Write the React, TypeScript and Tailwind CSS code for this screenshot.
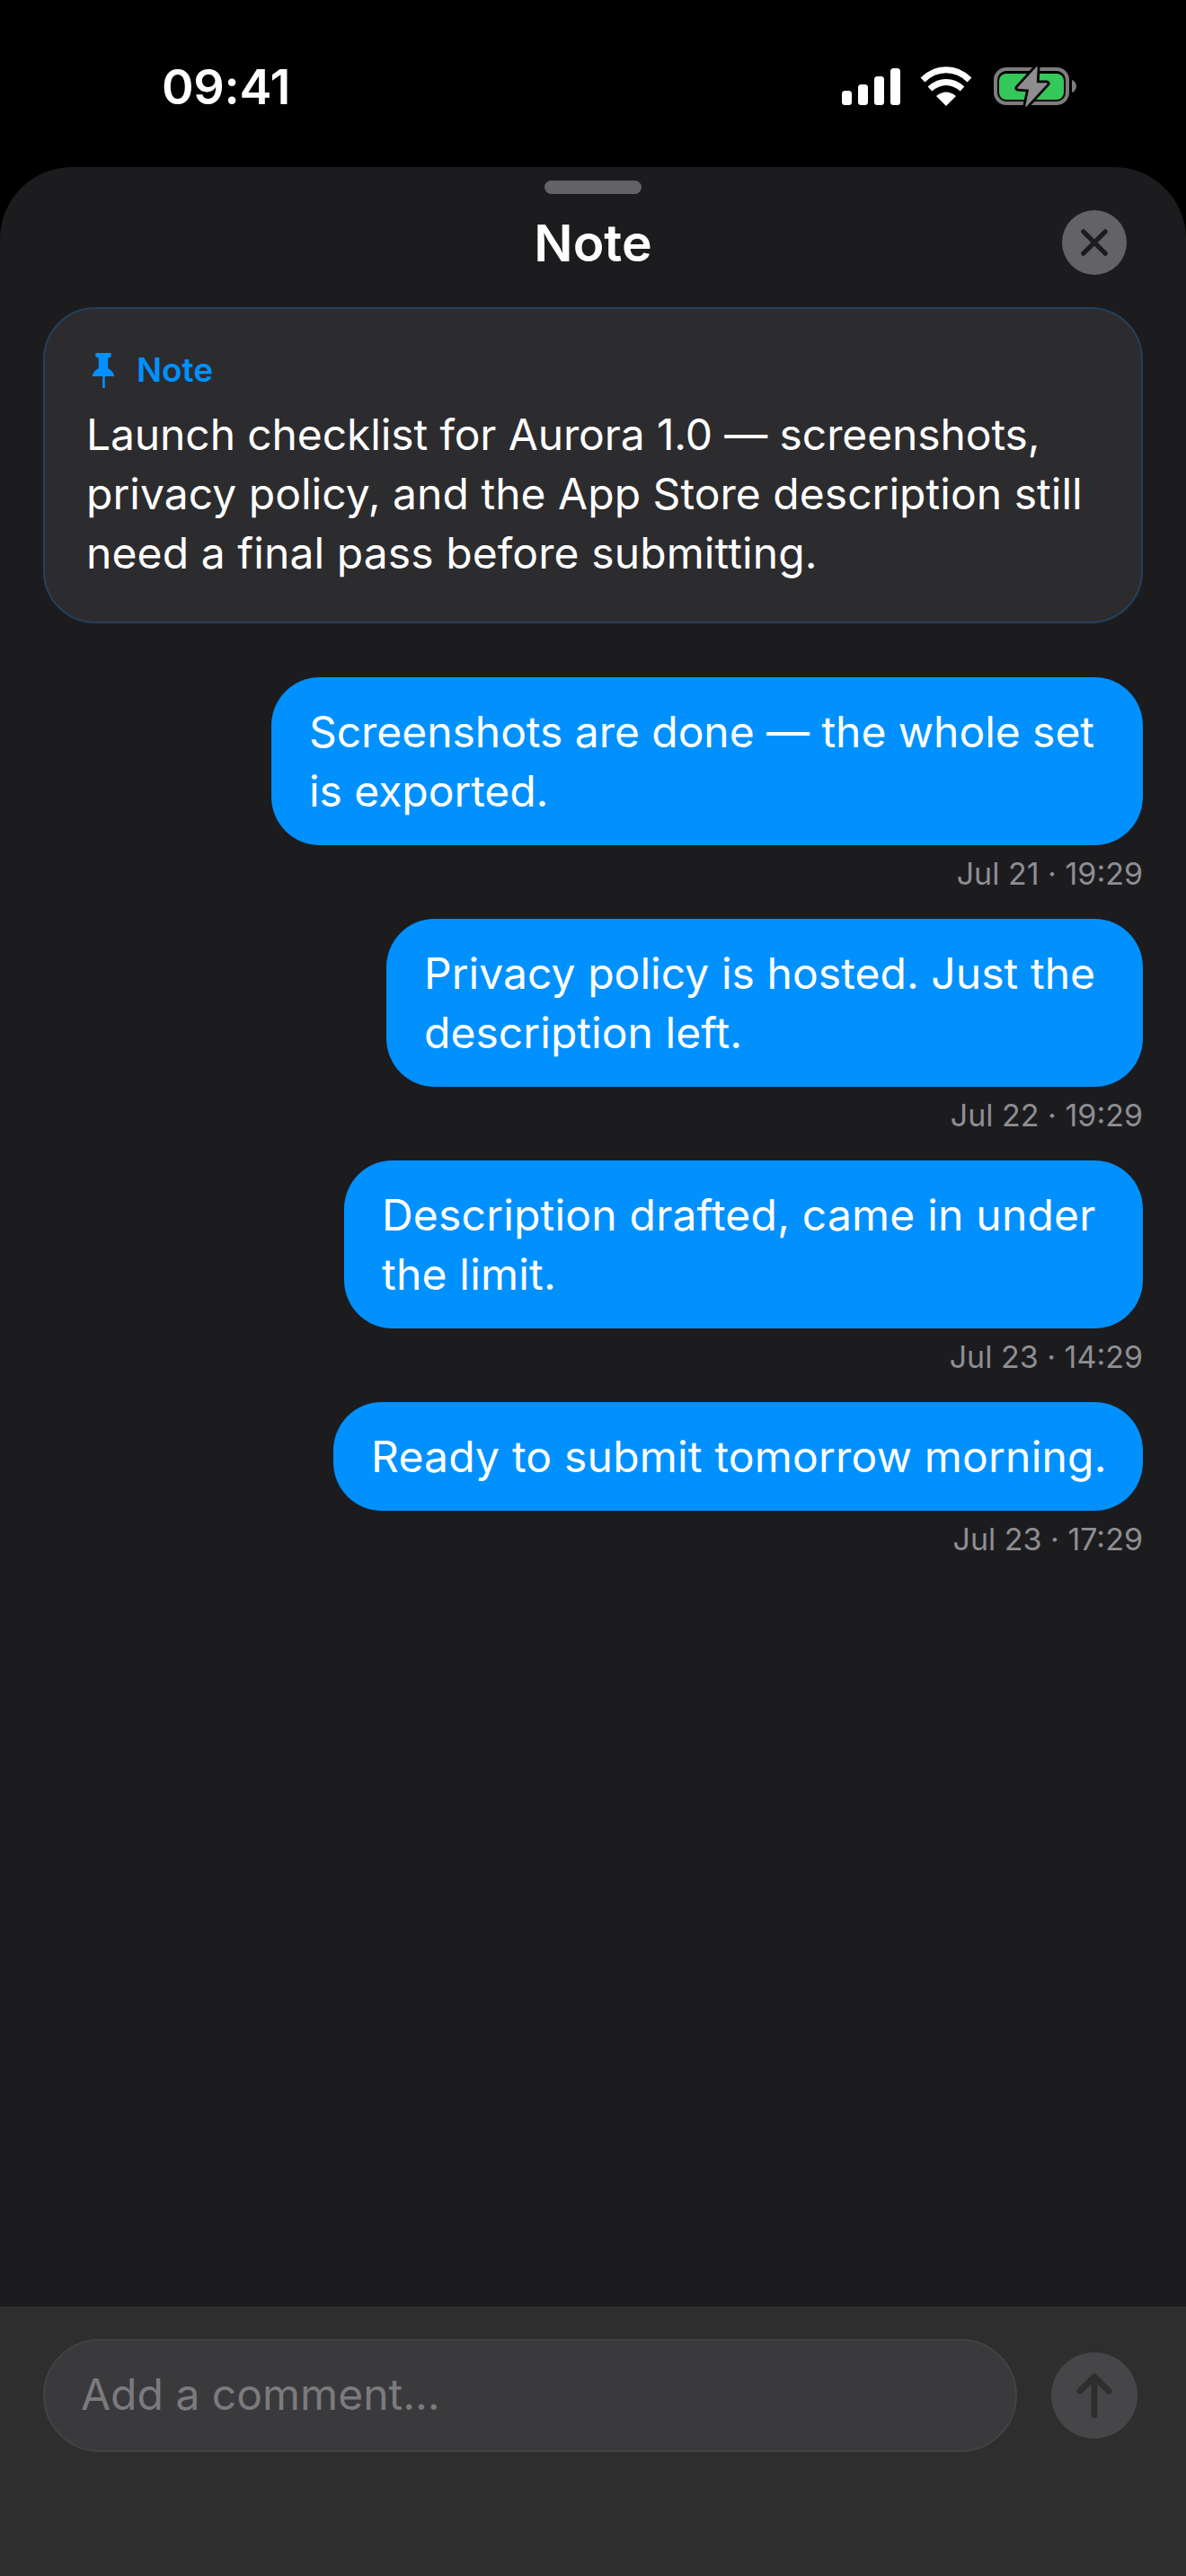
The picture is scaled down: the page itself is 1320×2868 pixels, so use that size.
const font = "font-['Inter',sans-serif]"

const messages = [
  { text: ['Screenshots are done — the whole set', 'is exported.'], time: 'Jul 21 · 19:29', bubble: 'w-[970px] tracking-[-0.05px]' },
  { text: ['Privacy policy is hosted. Just the', 'description left.'], time: 'Jul 22 · 19:29', bubble: 'w-[842px] tracking-[0.05px]' },
  { text: ['Description drafted, came in under', 'the limit.'], time: 'Jul 23 · 14:29', bubble: 'w-[889px] tracking-[0.2px]' },
  { text: ['Ready to submit tomorrow morning.'], time: 'Jul 23 · 17:29', bubble: 'w-[901px] tracking-[0.2px]' },
]

function StatusIcons() {
  return (
    <svg width="261" height="46" viewBox="0 0 261 46" className="overflow-visible">
      <rect x="0" y="27" width="11" height="16" rx="3.5" fill="#fff" />
      <rect x="18" y="20" width="11" height="23" rx="3.5" fill="#fff" />
      <rect x="36" y="11" width="11" height="32" rx="3.5" fill="#fff" />
      <rect x="54" y="2" width="11" height="41" rx="3.5" fill="#fff" />
      <path d="M90 15 C105 0 127 0 142 15" fill="none" stroke="#fff" strokeWidth="7" />
      <path d="M98 25 C109 15 123 15 134 25" fill="none" stroke="#fff" strokeWidth="7" />
      <path d="M105 33 C112 27 120 27 127 33 L116 44 Z" fill="#fff" />
      <rect x="171" y="3" width="80" height="38" rx="12" fill="none" stroke="#7d7d7d" strokeWidth="4" />
      <rect x="175" y="8" width="72" height="29" rx="8" fill="#34c759" />
      <path d="M256 15 C259 16 261 19 261 22 C261 25 259 28 256 29 Z" fill="#7d7d7d" />
      <path d="M217 1 L196 24 L209 25 L205 44 L228 19 L216 19 Z" fill="#000" stroke="#000" strokeWidth="7" strokeLinejoin="round" />
      <path d="M217 1 L196 24 L209 25 L205 44 L228 19 L216 19 Z" fill="#8e8e8e" stroke="#8e8e8e" strokeWidth="1.5" strokeLinejoin="round" />
    </svg>
  )
}

export default function App() {
  return (
    <div className={`${font} flex h-[2868px] w-[1320px] flex-col overflow-hidden bg-black text-white`}>
      <div className="flex h-[186px] items-start justify-between pl-[180px] pr-[122px] pt-[69px]">
        <span className="text-[54px] font-semibold leading-[56px] tracking-[-0.3px]">09:41</span>
        <div className="mt-[5px]">
          <StatusIcons />
        </div>
      </div>

      <div className="flex flex-1 flex-col overflow-hidden rounded-t-[80px] bg-[#1c1c1e]">
        <div className="relative h-[156px] shrink-0">
          <div className="mx-auto mt-[15px] h-[15px] w-[108px] rounded-full bg-[#636366]" />
          <h1 className="mt-[22px] text-center text-[57px] font-semibold leading-[66px]">Note</h1>
          <button className="absolute right-[66px] top-[48px] flex h-[72px] w-[72px] items-center justify-center rounded-full bg-[#636366]">
            <svg width="30" height="30" viewBox="0 0 32 32">
              <path d="M3 3 L29 29 M29 3 L3 29" stroke="#1c1c1e" strokeWidth="5.5" strokeLinecap="round" />
            </svg>
          </button>
        </div>

        <div className="mx-[48px] h-[352px] rounded-[58px] border-2 border-[#25405c] bg-[#2c2c2e] pl-[46px] pt-[46px]">
          <div className="flex h-[44px] items-center gap-[24px] pl-[6px] text-[#0091ff]">
            <svg width="26" height="39" viewBox="0 0 30 39" preserveAspectRatio="none" fill="#0091ff">
              <path d="M5 0 H25 V4 L21 6 V17 C25 19 29 22 29 26 H17 V39 H14 V26 H1 C1 22 5 19 9 17 V6 L5 4 Z" />
            </svg>
            <span className="text-[37px] font-semibold leading-[44px]">Note</span>
          </div>
          <p className="mt-[17px] text-[48px] leading-[66px]">
            <span className="tracking-[-0.12px]">Launch checklist for Aurora 1.0 — screenshots,</span>
            <br />
            <span className="tracking-[0.03px]">privacy policy, and the App Store description still</span>
            <br />
            <span className="tracking-[0.1px]">need a final pass before submitting.</span>
          </p>
        </div>

        <div className="mx-[48px] mt-[60px] flex flex-col items-end">
          {messages.map((m) => (
            <div key={m.time} className="mb-[30px] flex flex-col items-end">
              <div className={`rounded-[54px] bg-[#0091ff] pb-[27px] pl-[42px] pt-[28px] text-[48px] leading-[66px] ${m.bubble}`}>
                {m.text.map((line) => (
                  <div key={line}>{line}</div>
                ))}
              </div>
              <div className="mt-[12px] text-[34px] leading-[40px] text-[#8e8e93]">{m.time}</div>
            </div>
          ))}
        </div>

        <div className="mt-auto flex h-[300px] shrink-0 items-start bg-[#2e2e2e] pl-[48px] pr-[48px] pt-[36px]">
          <div className="flex h-[126px] w-[1084px] items-center rounded-full border-2 border-[#434345] bg-[#3a3a3c] pb-[3px] pl-[40px] text-[48px] text-[#7b7b7d]">
            Add a comment...
          </div>
          <button className="ml-[38px] mt-[15px] flex h-[96px] w-[96px] items-center justify-center rounded-full bg-[#464648]">
            <svg width="42" height="50" viewBox="0 0 42 50" fill="none">
              <path d="M21 47 V4 M5 20 L21 4 L37 20" stroke="#2e2e2e" strokeWidth="7" strokeLinecap="round" strokeLinejoin="round" />
            </svg>
          </button>
        </div>
      </div>
    </div>
  )
}
